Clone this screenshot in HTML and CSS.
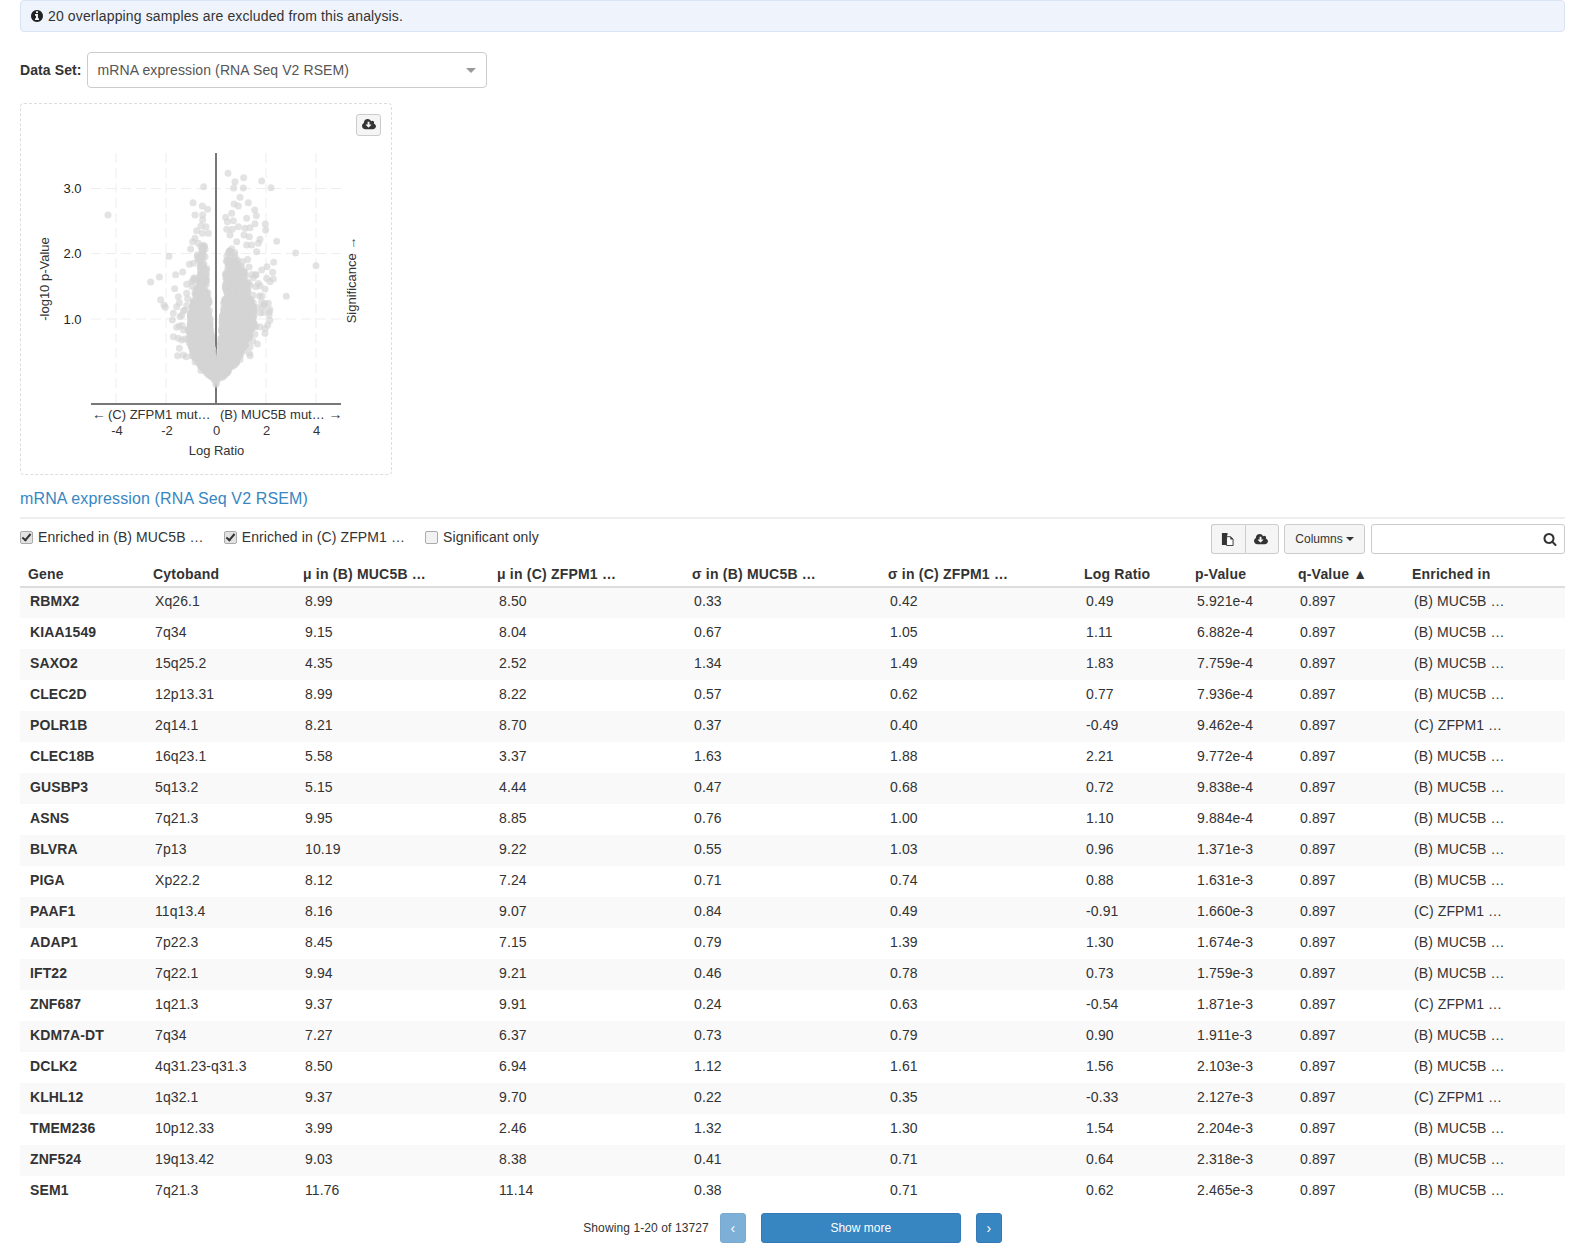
FILE: index.html
```html
<!DOCTYPE html>
<html lang="en">
  <head>
    <meta charset="UTF-8" />
    <title>Mutual exclusivity - mRNA expression</title>
    <link rel="stylesheet" href="styles.css">
  </head>
  <body>
    <div class="alert">
      <svg class="icon-info" viewBox="128 128 1536 1536"><path d="M1152 1376v-160q0-14-9-23t-23-9h-96v-512q0-14-9-23t-23-9h-320q-14 0-23 9t-9 23v160q0 14 9 23t23 9h96v320h-96q-14 0-23 9t-9 23v160q0 14 9 23t23 9h448q14 0 23-9t9-23zm-128-896v-160q0-14-9-23t-23-9h-192q-14 0-23 9t-9 23v160q0 14 9 23t23 9h192q14 0 23-9t9-23zm640 416q0 209-103 385.5t-279.5 279.5-385.5 103-385.5-103-279.5-279.5-103-385.5 103-385.5 279.5-279.5 385.5-103 385.5 103 279.5 279.5 103 385.5z"/></svg>
      <span>20 overlapping samples are excluded from this analysis.</span>
    </div>

    <div class="dataset">
      <label class="dataset-label">Data Set:</label>
      <div class="select">
        <span>mRNA expression (RNA Seq V2 RSEM)</span>
        <i class="select-caret"></i>
      </div>
    </div>

    <div class="plot-box">
      <button class="btn btn-download" type="button">
        <svg class="icon-cloud" viewBox="0 0 1920 1792"><path d="M1280 928q0-14-9-23t-23-9h-224v-352q0-13-9.5-22.5t-22.5-9.5h-192q-13 0-22.5 9.5t-9.5 22.5v352h-224q-14 0-23 9t-9 23q0 13 9 23l352 352q9 9 23 9t23-9l351-351q10-12 10-24zm640 224q0 159-112.5 271.5t-271.5 112.5h-1088q-185 0-316.5-131.5t-131.5-316.5q0-130 70-240t188-165q-2-30-2-43 0-212 150-362t362-150q156 0 285.5 87t188.5 231q71-62 166-62 106 0 181 75t75 181q0 76-41 138 130 31 213.5 135.5t83.5 238.5z"/></svg>
      </button>
      <svg id="volcano" class="volcano" viewBox="21 104 370 370">
        <g class="grid">
          <line x1="116" y1="153" x2="116" y2="404" />
          <line x1="166" y1="153" x2="166" y2="404" />
          <line x1="266" y1="153" x2="266" y2="404" />
          <line x1="316" y1="153" x2="316" y2="404" />
          <line x1="91" y1="188.5" x2="341" y2="188.5" />
          <line x1="91" y1="253.5" x2="341" y2="253.5" />
          <line x1="91" y1="319" x2="341" y2="319" />
        </g>
        <line class="axis" x1="216" y1="153" x2="216" y2="404" />
        <line class="axis" x1="91" y1="404" x2="341" y2="404" />
        <g id="points"></g>
        <g class="tick-y">
          <text x="81.5" y="193">3.0</text>
          <text x="81.5" y="258">2.0</text>
          <text x="81.5" y="324">1.0</text>
        </g>
        <g class="tick-x">
          <text x="117" y="435">-4</text>
          <text x="167" y="435">-2</text>
          <text x="216.5" y="435">0</text>
          <text x="266.5" y="435">2</text>
          <text x="316.5" y="435">4</text>
          <text x="216.5" y="455">Log Ratio</text>
        </g>
        <text class="group-label group-arrow" x="92" y="419">←</text>
        <text class="group-label" x="108" y="419">(C) ZFPM1 mut…</text>
        <text class="group-label" x="220" y="419">(B) MUC5B mut…</text>
        <text class="group-label group-arrow" x="328.5" y="419">→</text>
        <text class="axis-title" transform="translate(48.5 279) rotate(-90)">-log10 p-Value</text>
        <text class="axis-title" transform="translate(356 280) rotate(-90)">Significance →</text>
      </svg>
    </div>

    <h4 class="section-title">mRNA expression (RNA Seq V2 RSEM)</h4>

    <div class="toolbar">
      <label class="check"><input type="checkbox" checked />Enriched in (B) MUC5B …</label>
      <label class="check"><input type="checkbox" checked />Enriched in (C) ZFPM1 …</label>
      <label class="check"><input type="checkbox" />Significant only</label>
      <div class="toolbar-right">
        <div class="btn-group">
          <button class="btn" type="button">
            <svg class="icon-copy" viewBox="0 0 14 14"><path d="M1 0h6v2.5H6.5V13H1z"/><path class="icon-copy-page" d="M6 4h4.5L13 6.5V13.5H6z"/><path d="M10 4l3 3h-3z"/></svg>
          </button>
          <button class="btn" type="button">
            <svg class="icon-cloud" viewBox="0 0 1920 1792"><path d="M1280 928q0-14-9-23t-23-9h-224v-352q0-13-9.5-22.5t-22.5-9.5h-192q-13 0-22.5 9.5t-9.5 22.5v352h-224q-14 0-23 9t-9 23q0 13 9 23l352 352q9 9 23 9t23-9l351-351q10-12 10-24zm640 224q0 159-112.5 271.5t-271.5 112.5h-1088q-185 0-316.5-131.5t-131.5-316.5q0-130 70-240t188-165q-2-30-2-43 0-212 150-362t362-150q156 0 285.5 87t188.5 231q71-62 166-62 106 0 181 75t75 181q0 76-41 138 130 31 213.5 135.5t83.5 238.5z"/></svg>
          </button>
        </div>
        <button class="btn btn-columns" type="button">Columns <i class="caret"></i></button>
        <div class="search">
          <svg class="icon-search" viewBox="0 0 1792 1792"><path d="M1216 832q0-185-131.5-316.5t-316.5-131.5-316.5 131.5-131.5 316.5 131.5 316.5 316.5 131.5 316.5-131.5 131.5-316.5zm512 832q0 52-38 90t-90 38q-54 0-90-38l-343-342q-179 124-399 124-143 0-273.5-55.5t-225-150-150-225-55.5-273.5 55.5-273.5 150-225 225-150 273.5-55.5 273.5 55.5 225 150 150 225 55.5 273.5q0 220-124 399l343 343q37 37 37 90z"/></svg>
        </div>
      </div>
    </div>

    <table class="results">
      <colgroup>
        <col class="col-gene" /><col class="col-band" /><col class="col-mu" /><col class="col-mu2" />
        <col class="col-sd" /><col class="col-sd" /><col class="col-lr" /><col class="col-p" />
        <col class="col-q" /><col class="col-enr" />
      </colgroup>
      <thead>
        <tr>
          <th>Gene</th><th>Cytoband</th><th>μ in (B) MUC5B …</th><th>μ in (C) ZFPM1 …</th>
          <th>σ in (B) MUC5B …</th><th>σ in (C) ZFPM1 …</th><th>Log Ratio</th><th>p-Value</th>
          <th>q-Value ▲</th><th>Enriched in</th>
        </tr>
      </thead>
      <tbody>
        <tr><td>RBMX2</td><td>Xq26.1</td><td>8.99</td><td>8.50</td><td>0.33</td><td>0.42</td><td>0.49</td><td>5.921e-4</td><td>0.897</td><td>(B) MUC5B …</td></tr>
        <tr><td>KIAA1549</td><td>7q34</td><td>9.15</td><td>8.04</td><td>0.67</td><td>1.05</td><td>1.11</td><td>6.882e-4</td><td>0.897</td><td>(B) MUC5B …</td></tr>
        <tr><td>SAXO2</td><td>15q25.2</td><td>4.35</td><td>2.52</td><td>1.34</td><td>1.49</td><td>1.83</td><td>7.759e-4</td><td>0.897</td><td>(B) MUC5B …</td></tr>
        <tr><td>CLEC2D</td><td>12p13.31</td><td>8.99</td><td>8.22</td><td>0.57</td><td>0.62</td><td>0.77</td><td>7.936e-4</td><td>0.897</td><td>(B) MUC5B …</td></tr>
        <tr><td>POLR1B</td><td>2q14.1</td><td>8.21</td><td>8.70</td><td>0.37</td><td>0.40</td><td>-0.49</td><td>9.462e-4</td><td>0.897</td><td>(C) ZFPM1 …</td></tr>
        <tr><td>CLEC18B</td><td>16q23.1</td><td>5.58</td><td>3.37</td><td>1.63</td><td>1.88</td><td>2.21</td><td>9.772e-4</td><td>0.897</td><td>(B) MUC5B …</td></tr>
        <tr><td>GUSBP3</td><td>5q13.2</td><td>5.15</td><td>4.44</td><td>0.47</td><td>0.68</td><td>0.72</td><td>9.838e-4</td><td>0.897</td><td>(B) MUC5B …</td></tr>
        <tr><td>ASNS</td><td>7q21.3</td><td>9.95</td><td>8.85</td><td>0.76</td><td>1.00</td><td>1.10</td><td>9.884e-4</td><td>0.897</td><td>(B) MUC5B …</td></tr>
        <tr><td>BLVRA</td><td>7p13</td><td>10.19</td><td>9.22</td><td>0.55</td><td>1.03</td><td>0.96</td><td>1.371e-3</td><td>0.897</td><td>(B) MUC5B …</td></tr>
        <tr><td>PIGA</td><td>Xp22.2</td><td>8.12</td><td>7.24</td><td>0.71</td><td>0.74</td><td>0.88</td><td>1.631e-3</td><td>0.897</td><td>(B) MUC5B …</td></tr>
        <tr><td>PAAF1</td><td>11q13.4</td><td>8.16</td><td>9.07</td><td>0.84</td><td>0.49</td><td>-0.91</td><td>1.660e-3</td><td>0.897</td><td>(C) ZFPM1 …</td></tr>
        <tr><td>ADAP1</td><td>7p22.3</td><td>8.45</td><td>7.15</td><td>0.79</td><td>1.39</td><td>1.30</td><td>1.674e-3</td><td>0.897</td><td>(B) MUC5B …</td></tr>
        <tr><td>IFT22</td><td>7q22.1</td><td>9.94</td><td>9.21</td><td>0.46</td><td>0.78</td><td>0.73</td><td>1.759e-3</td><td>0.897</td><td>(B) MUC5B …</td></tr>
        <tr><td>ZNF687</td><td>1q21.3</td><td>9.37</td><td>9.91</td><td>0.24</td><td>0.63</td><td>-0.54</td><td>1.871e-3</td><td>0.897</td><td>(C) ZFPM1 …</td></tr>
        <tr><td>KDM7A-DT</td><td>7q34</td><td>7.27</td><td>6.37</td><td>0.73</td><td>0.79</td><td>0.90</td><td>1.911e-3</td><td>0.897</td><td>(B) MUC5B …</td></tr>
        <tr><td>DCLK2</td><td>4q31.23-q31.3</td><td>8.50</td><td>6.94</td><td>1.12</td><td>1.61</td><td>1.56</td><td>2.103e-3</td><td>0.897</td><td>(B) MUC5B …</td></tr>
        <tr><td>KLHL12</td><td>1q32.1</td><td>9.37</td><td>9.70</td><td>0.22</td><td>0.35</td><td>-0.33</td><td>2.127e-3</td><td>0.897</td><td>(C) ZFPM1 …</td></tr>
        <tr><td>TMEM236</td><td>10p12.33</td><td>3.99</td><td>2.46</td><td>1.32</td><td>1.30</td><td>1.54</td><td>2.204e-3</td><td>0.897</td><td>(B) MUC5B …</td></tr>
        <tr><td>ZNF524</td><td>19q13.42</td><td>9.03</td><td>8.38</td><td>0.41</td><td>0.71</td><td>0.64</td><td>2.318e-3</td><td>0.897</td><td>(B) MUC5B …</td></tr>
        <tr><td>SEM1</td><td>7q21.3</td><td>11.76</td><td>11.14</td><td>0.38</td><td>0.71</td><td>0.62</td><td>2.465e-3</td><td>0.897</td><td>(B) MUC5B …</td></tr>
      </tbody>
    </table>

    <div class="pager">
      <span class="pager-text">Showing 1-20 of 13727</span>
      <button class="btn-primary btn-page is-disabled" type="button">‹</button>
      <button class="btn-primary btn-more" type="button">Show more</button>
      <button class="btn-primary btn-page" type="button">›</button>
    </div>

    <script src="plot.js"></script>
  </body>
</html>
```

FILE: styles.css
```css
*,
*::before,
*::after {
  box-sizing: border-box;
}

body {
  margin: 0;
  padding: 0 20px;
  height: 1243px;
  overflow: hidden;
  font-family: 'Liberation Sans', Arial, sans-serif;
  font-size: 14px;
  letter-spacing: 0.1px;
  color: #333;
  background: #fff;
}

.alert {
  display: flex;
  align-items: center;
  gap: 5px;
  height: 32px;
  padding: 0 10px;
  letter-spacing: 0.13px;
  background: #eff4fc;
  border: 1px solid #d8e4f3;
  border-radius: 4px;
}
.icon-info {
  width: 12px;
  height: 12px;
  fill: #222;
}

.dataset {
  display: flex;
  align-items: center;
  gap: 5px;
  margin-top: 20px;
}
.dataset-label {
  font-weight: bold;
}
.select {
  display: flex;
  align-items: center;
  justify-content: space-between;
  width: 400px;
  height: 36px;
  padding: 0 10px 0 10px;
  color: #555;
  border: 1px solid #ccc;
  border-radius: 4px;
}
.select-caret {
  border-top: 5px solid #999;
  border-left: 5px solid transparent;
  border-right: 5px solid transparent;
}

.plot-box {
  position: relative;
  width: 372px;
  height: 372px;
  margin-top: 15px;
  border: 1px dashed #ddd;
  border-radius: 4px;
}
.volcano {
  display: block;
  width: 370px;
  height: 370px;
  font-family: 'Liberation Sans', Arial, sans-serif;
  font-size: 13px;
  letter-spacing: 0;
}
.btn-download {
  position: absolute;
  top: 10px;
  right: 10px;
  width: 25px;
  height: 22px;
  padding: 0 0 2px;
}
.grid line {
  stroke: #eee;
  stroke-width: 1;
  stroke-dasharray: 10 5;
}
.axis {
  stroke: #777;
  stroke-width: 2;
}
.tick-y text {
  text-anchor: end;
  fill: #222;
}
.tick-x text {
  text-anchor: middle;
  fill: #333;
}
.group-label,
.axis-title {
  fill: #333;
}
.group-arrow {
  font-size: 14px;
}
.axis-title {
  text-anchor: middle;
}

.section-title {
  margin: 15px 0 0;
  padding-bottom: 9px;
  font-size: 16px;
  font-weight: normal;
  line-height: 18px;
  letter-spacing: 0.13px;
  color: #3786c2;
  border-bottom: 2px solid #eee;
}

.toolbar {
  display: flex;
  align-items: flex-start;
  height: 40px;
  padding-top: 5px;
}
.check {
  display: flex;
  align-items: center;
  height: 26px;
  margin-right: 20px;
  white-space: pre;
}
.check input {
  appearance: none;
  position: relative;
  width: 13px;
  height: 13px;
  margin: 0 5px 0 0;
  background: #f2f2f2;
  border: 1px solid #aaa;
  border-radius: 2px;
}
.check input:checked {
  background: #e2e2e2;
}
.check input:checked::before {
  content: '';
  position: absolute;
  left: 3px;
  top: 0;
  width: 5px;
  height: 9px;
  border: solid #333;
  border-width: 0 2px 2px 0;
  transform: rotate(40deg);
}
.toolbar-right {
  display: flex;
  gap: 5px;
  margin-left: auto;
}
.btn-group {
  display: flex;
}
.btn {
  display: flex;
  align-items: center;
  justify-content: center;
  font: inherit;
  color: #333;
  background: #f5f5f5;
  border: 1px solid #ccc;
  border-radius: 3px;
}
.btn-group .btn {
  width: 34px;
  height: 30px;
  padding: 0 2px 0 0;
}
.btn-group .btn:first-child {
  border-right: 0;
  border-radius: 3px 0 0 3px;
}
.btn-group .btn:last-child {
  border-radius: 0 3px 3px 0;
}
.btn-columns {
  gap: 3px;
  width: 81px;
  height: 30px;
  padding: 0;
  font-size: 12px;
}
.caret {
  border-top: 4px solid #333;
  border-left: 4px solid transparent;
  border-right: 4px solid transparent;
}
.icon-cloud {
  width: 14px;
  height: 13px;
  fill: #333;
}
.icon-copy {
  width: 13px;
  height: 13px;
  fill: #333;
}
.icon-copy-page {
  fill: #fff;
  stroke: #333;
  stroke-width: 1;
}
.search {
  display: flex;
  align-items: center;
  justify-content: flex-end;
  width: 194px;
  height: 30px;
  margin-left: 1px;
  padding-right: 7px;
  border: 1px solid #ccc;
  border-radius: 3px;
}
.icon-search {
  width: 14px;
  height: 14px;
  fill: #333;
}

.results {
  width: 1545px;
  table-layout: fixed;
  border-collapse: collapse;
}
.col-gene { width: 125px; }
.col-band { width: 150px; }
.col-mu { width: 194px; }
.col-mu2 { width: 195px; }
.col-sd { width: 196px; }
.col-lr { width: 111px; }
.col-p { width: 103px; }
.col-q { width: 114px; }
.col-enr { width: 161px; }

.results th {
  height: 28px;
  padding: 2px 8px 0;
  font-weight: bold;
  text-align: left;
  white-space: nowrap;
  letter-spacing: 0.2px;
  border-bottom: 2px solid #ddd;
}
.results td {
  height: 31px;
  padding: 0 10px 4px;
  white-space: nowrap;
  letter-spacing: 0.1px;
}
.results td:first-child {
  font-weight: bold;
}
.results tbody tr:nth-child(odd) {
  background: #f9f9f9;
}

.pager {
  display: flex;
  align-items: center;
  justify-content: center;
  margin-top: 6px;
  height: 30px;
}
.pager-text {
  margin-right: 11px;
  font-size: 12px;
}
.btn-primary {
  height: 30px;
  padding: 0;
  font: inherit;
  font-size: 12px;
  color: #fff;
  background: #3786c2;
  border: 1px solid #337ab7;
  border-radius: 3px;
}
.btn-page {
  width: 26px;
  font-size: 14px;
}
.btn-more {
  width: 200px;
  margin: 0 15px;
}
.is-disabled {
  opacity: 0.65;
}
```

FILE: plot.js
```js
// outliers read off the chart, in px inside the 380x380 crop at 3x
const outliers = [
  [264,345],[624,220],[671,233],[645,245],[725,243],[641,264],[670,264],[753,263],[551,260],
  [660,292],[519,308],[642,312],[655,318],[685,308],[547,318],[563,328],[635,340],[704,330],
  [709,347],[525,345],[548,345],[617,352],[680,355],[622,365],[640,362],[548,360],[543,378],
  [558,380],[705,371],[736,372],[655,380],[620,388],[637,388],[675,385],[690,383],[737,390],
  [530,392],[547,400],[565,400],[630,405],[672,405],[688,410],[525,415],[518,425],[720,418],
  [770,424],[650,425],[680,435],[695,435],[715,430],[535,430],[512,447],[447,469],[827,459],
  [710,455],[888,497],[761,487],[741,500],[488,516],[467,524],[418,531],[392,546],[508,493],
  [520,490],[725,510],[758,517],[740,535],[760,537],[750,545],[500,553],[515,545],[525,535],
  [464,566],[735,567],[720,557],[799,589],[500,580],[475,590],[422,599],[432,615],[436,622],
  [478,608],[470,620],[725,605],[745,610],[460,640],[457,660],[480,650],[748,636],[743,676],
  [470,682],[460,710],[475,715],[485,720],[490,690],[735,700],[720,680],[712,732],[478,745],
  [473,767],[490,765],[688,760],[690,740],[588,853]
]

// outline of the dense V, same coordinates
const mass = [
  [588,850],[560,820],[535,792],[518,765],[512,740],[508,690],[512,640],[524,600],[536,555],
  [542,510],[534,480],[537,458],[552,436],[560,440],[560,500],[566,580],[572,680],[577,740],
  [585,790],[592,790],[600,740],[605,680],[610,610],[615,530],[618,470],[625,438],[640,465],
  [662,485],[676,520],[684,560],[698,620],[704,660],[688,710],[668,760],[645,795],[615,825]
]

const inside = (x, y) => {
  let hit = false
  for (let i = 0, j = mass.length - 1; i < mass.length; j = i++) {
    const [xi, yi] = mass[i]
    const [xj, yj] = mass[j]
    if (yi > y !== yj > y && x < ((xj - xi) * (y - yi)) / (yj - yi) + xi) hit = !hit
  }
  return hit
}

let seed = 12345
const rand = () => {
  seed = (seed * 1664525 + 1013904223) % 4294967296
  return seed / 4294967296
}

const points = outliers.slice()
while (points.length < 2200) {
  const x = 500 + rand() * 210
  const y = 430 + rand() * 425
  // the top of the V is thinner than the bottom
  const keep = y < 520 ? 0.35 : y < 600 ? 0.6 : 1
  if (!inside(x, y) || rand() > keep) continue
  // some points stray outwards, more of them high up, that gives the fringe
  const stray = rand() < (y < 650 ? 0.3 : 0.1) ? 1 + rand() * 0.5 : 1
  points.push([588 + (x - 588) * stray, y])
}

const group = document.getElementById('points')
points.forEach(([x, y]) => {
  const dot = document.createElementNS('http://www.w3.org/2000/svg', 'circle')
  dot.setAttribute('cx', 20 + x / 3)
  dot.setAttribute('cy', 100 + y / 3)
  dot.setAttribute('r', 3.5)
  dot.setAttribute('fill', '#d4d4d4')
  dot.setAttribute('fill-opacity', 0.65)
  group.appendChild(dot)
})
```
